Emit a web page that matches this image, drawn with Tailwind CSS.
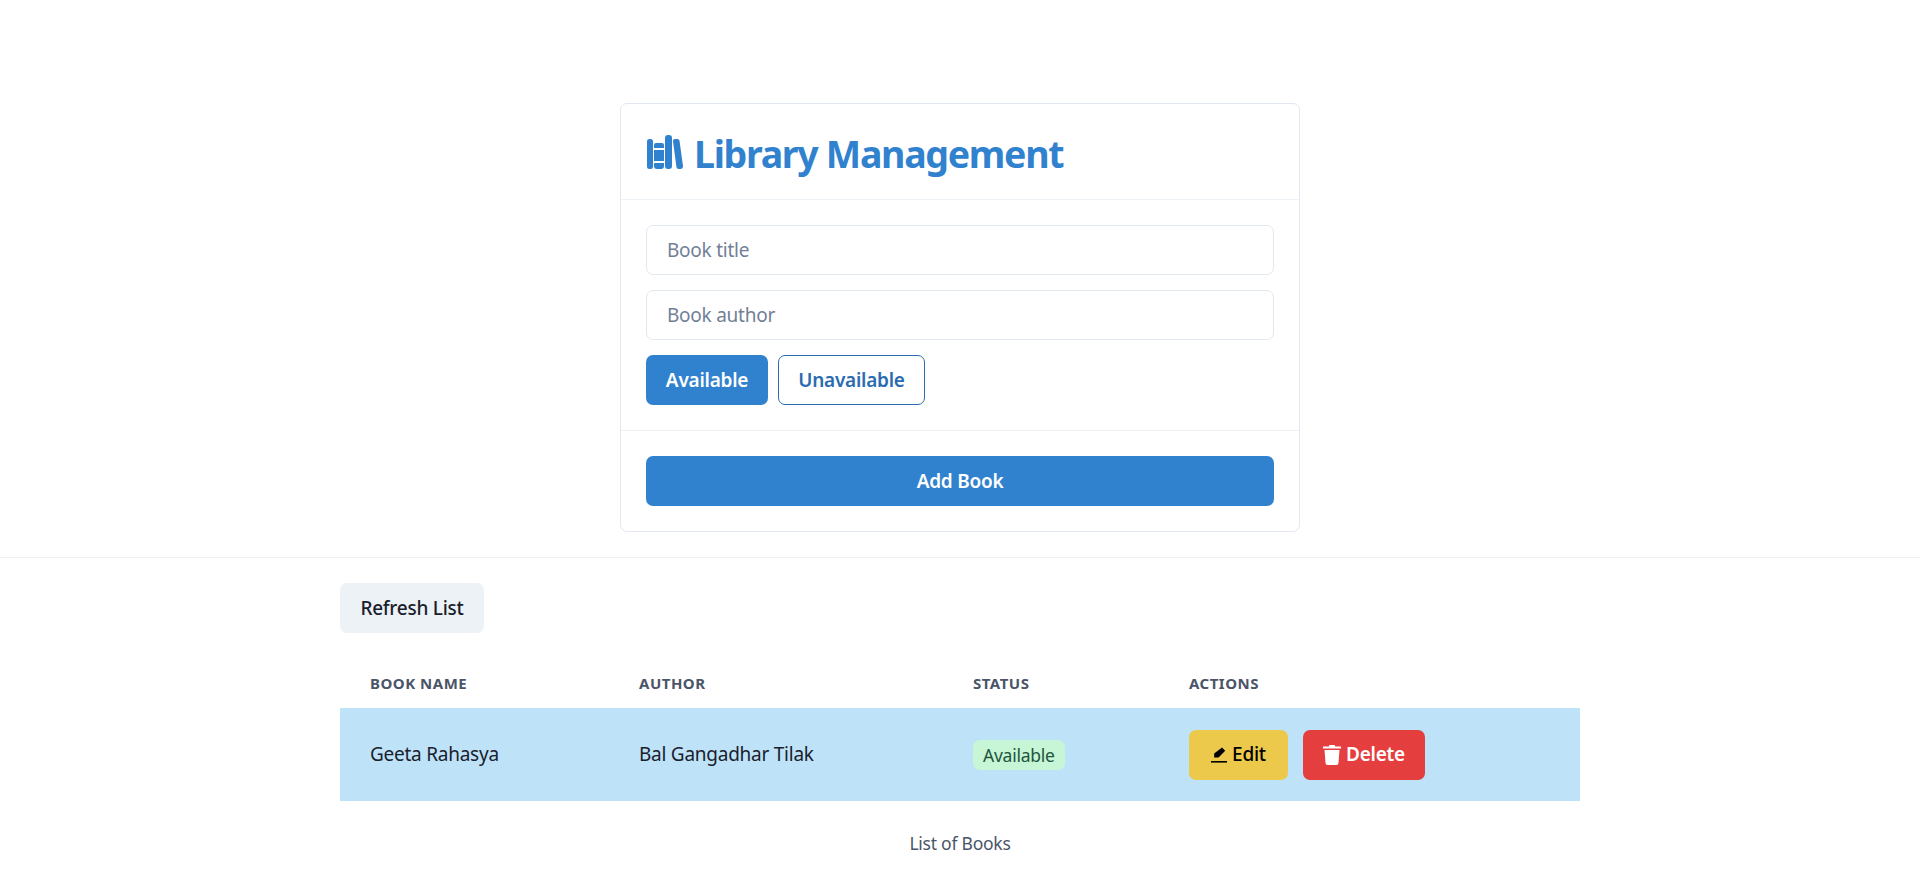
<!DOCTYPE html>
<html lang="en">
<head>
  <meta charset="UTF-8" />
  <title>Library Management</title>
  <script src="https://cdn.jsdelivr.net/npm/@tailwindcss/browser@4"></script>
</head>
<body class="bg-white text-[#1a202c] font-['Noto_Sans',sans-serif] text-[19px] tracking-[-0.25px]">

  <!-- Add book card -->
  <div class="pt-[103px] pb-[25px]">
    <div class="mx-auto w-[680px] rounded-[7px] border border-[#e2e8f0]">
      <div class="flex items-center h-[96px] pl-[26px] border-b border-[#edf2f7] text-[#3182ce]">
        <svg class="w-[36px] h-[34px] mr-[11px]" viewBox="0 0 36 34" fill="#3182ce">
          <rect x="0" y="4" width="6" height="30" rx="2.5" />
          <path d="M9 8h6a2 2 0 0 1 2 2v3H7v-3a2 2 0 0 1 2-2zM7 15h10v11H7zM7 28h10v3a3 3 0 0 1-3 3h-4a3 3 0 0 1-3-3z" />
          <rect x="18" y="0" width="7" height="34" rx="3" />
          <path d="M28 4h2.5a2 2 0 0 1 2 1.8L36 31a2.6 2.6 0 0 1-2.6 3h-1.6a2.4 2.4 0 0 1-2.4-2.2L26 6.2A2 2 0 0 1 28 4z" />
        </svg>
        <h2 class="pt-[4px] text-[37.5px] leading-[45px] font-bold tracking-[-1.3px]">Library Management</h2>
      </div>

      <div class="flex flex-col gap-[15px] p-[25px] border-b border-[#edf2f7]">
        <input type="text" placeholder="Book title" class="w-full h-[50px] px-[20px] rounded-[7px] border border-[#e2e8f0] placeholder:text-[#718096]" />
        <input type="text" placeholder="Book author" class="w-full h-[50px] px-[20px] rounded-[7px] border border-[#e2e8f0] placeholder:text-[#718096]" />
        <div class="flex gap-[10px]">
          <button class="w-[122px] h-[50px] rounded-[7px] bg-[#3182ce] text-white font-semibold">Available</button>
          <button class="w-[147px] h-[50px] rounded-[7px] border border-[#2b6cb0] text-[#2b6cb0] font-semibold">Unavailable</button>
        </div>
      </div>

      <div class="p-[25px]">
        <button class="w-full h-[50px] rounded-[7px] bg-[#3182ce] text-white font-semibold">Add Book</button>
      </div>
    </div>
  </div>

  <hr class="border-[#edf2f7]" />

  <!-- Book list -->
  <div class="mx-auto w-[1240px] pt-[25px]">
    <button class="w-[144px] h-[50px] rounded-[7px] bg-[#edf2f7] font-medium">Refresh List</button>

    <table class="w-full table-fixed mt-[25px]">
      <thead>
        <tr class="h-[50px] text-left text-[15px] font-bold tracking-[0.5px] text-[#4a5568]">
          <th class="w-[269px] pl-[30px] font-bold">BOOK NAME</th>
          <th class="w-[334px] pl-[30px] font-bold">AUTHOR</th>
          <th class="w-[216px] pl-[30px] font-bold">STATUS</th>
          <th class="pl-[30px] font-bold">ACTIONS</th>
        </tr>
      </thead>
      <tbody>
        <tr class="h-[93px] bg-[#bee3f8]">
          <td class="pl-[30px]">Geeta Rahasya</td>
          <td class="pl-[30px]">Bal Gangadhar Tilak</td>
          <td class="pl-[30px]">
            <span class="inline-block h-[30px] px-[10px] rounded-[7px] bg-[#c6f6d5] text-[#22543d] text-[17.5px] leading-[30px]">Available</span>
          </td>
          <td class="pl-[30px]">
            <div class="flex gap-[15px]">
              <button class="flex items-center justify-center gap-[5px] w-[99px] h-[50px] rounded-[7px] bg-[#ecc94b] text-black font-medium">
                <svg class="w-[16px] h-[16px]" viewBox="0 0 16 16" fill="#000">
                  <path d="M11 0.5l3.2 3.2-6.6 6.8H3.2V6.4z" />
                  <rect x="0" y="14" width="16" height="1.6" />
                </svg>
                Edit
              </button>
              <button class="flex items-center justify-center gap-[5px] w-[122px] h-[50px] rounded-[7px] bg-[#e53e3e] text-white font-semibold">
                <svg class="w-[18px] h-[20px]" viewBox="0 0 18 20" fill="#fff">
                  <path d="M6.5 0h5l.8 1.5H18v2H0v-2h5.7z" />
                  <path d="M1.5 5h15l-1 13a2 2 0 0 1-2 2h-9a2 2 0 0 1-2-2z" />
                </svg>
                Delete
              </button>
            </div>
          </td>
        </tr>
      </tbody>
    </table>

    <p class="mt-[29px] text-center text-[17.5px] text-[#4a5568]">List of Books</p>
  </div>

</body>
</html>
